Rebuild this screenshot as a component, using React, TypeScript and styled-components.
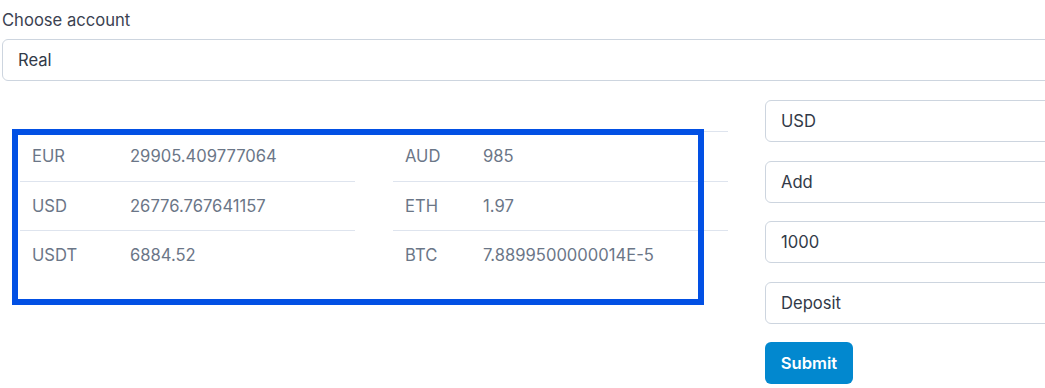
import React from "react";
import styled, { createGlobalStyle } from "styled-components";

const GlobalStyle = createGlobalStyle`
  html, body {
    margin: 0;
    padding: 0;
    background: #ffffff;
    overflow: hidden;
  }
  body {
    font-family: Inter, "Noto Sans", "Liberation Sans", sans-serif;
  }
  * { box-sizing: border-box; }
`;

const Page = styled.div`
  width: 1045px;
  height: 388px;
  padding: 10px 0 0 2px;
  overflow: hidden;
`;

const Label = styled.label`
  display: block;
  font-size: 16.6px;
  line-height: 21px;
  color: #3b4251;
  margin-bottom: 8px;
`;

const Control = styled.div`
  display: flex;
  align-items: center;
  height: 42px;
  padding: 0 15px;
  border: 1px solid #cdd5df;
  border-radius: 6px;
  background: #fff;
  font-size: 16.6px;
  color: #323a48;
`;

const AccountControl = styled(Control)`
  width: 1080px;
`;

const Main = styled.div`
  display: flex;
  align-items: flex-start;
  margin-top: 19px;
`;

const TablesArea = styled.div`
  position: relative;
  display: flex;
  align-items: flex-start;
  gap: 38px;
  padding: 31px 0 0 18px;
`;

const Table = styled.table`
  width: 335px;
  border-collapse: collapse;
  font-size: 16.6px;
  color: #6b7687;
`;

const Cell = styled.td<{ $w?: number }>`
  width: ${(p) => (p.$w ? `${p.$w}px` : "auto")};
  padding: 12px 12px;
  line-height: 24.5px;
  border-top: 1px solid #dee4ee;
  text-align: left;
  vertical-align: middle;
  white-space: nowrap;
`;

const Highlight = styled.div`
  position: absolute;
  left: 10px;
  top: 29px;
  width: 692px;
  height: 176px;
  border: 6px solid #0250e4;
  pointer-events: none;
`;

const RightCol = styled.div`
  display: flex;
  flex-direction: column;
  gap: 18.5px;
  margin-left: 37px;
  width: 400px;
  flex-shrink: 0;
`;

const SubmitButton = styled.button`
  width: 88px;
  height: 42px;
  border: none;
  border-radius: 6px;
  background: #0288cf;
  color: #fff;
  font-family: inherit;
  font-size: 16.6px;
  font-weight: 600;
  cursor: pointer;
`;

type Row = [string, string];

const leftRows: Row[] = [
  ["EUR", "29905.409777064"],
  ["USD", "26776.767641157"],
  ["USDT", "6884.52"],
];

const rightRows: Row[] = [
  ["AUD", "985"],
  ["ETH", "1.97"],
  ["BTC", "7.8899500000014E-5"],
];

function BalanceTable({ rows, firstWidth }: { rows: Row[]; firstWidth: number }) {
  return (
    <Table>
      <tbody>
        {rows.map(([cur, val]) => (
          <tr key={cur}>
            <Cell $w={firstWidth}>{cur}</Cell>
            <Cell>{val}</Cell>
          </tr>
        ))}
      </tbody>
    </Table>
  );
}

export default function App() {
  return (
    <>
      <GlobalStyle />
      <Page>
        <Label>Choose account</Label>
        <AccountControl>Real</AccountControl>
        <Main>
          <TablesArea>
            <BalanceTable rows={leftRows} firstWidth={98} />
            <BalanceTable rows={rightRows} firstWidth={78} />
            <Highlight />
          </TablesArea>
          <RightCol>
            <Control>USD</Control>
            <Control>Add</Control>
            <Control>1000</Control>
            <Control>Deposit</Control>
            <SubmitButton>Submit</SubmitButton>
          </RightCol>
        </Main>
      </Page>
    </>
  );
}
